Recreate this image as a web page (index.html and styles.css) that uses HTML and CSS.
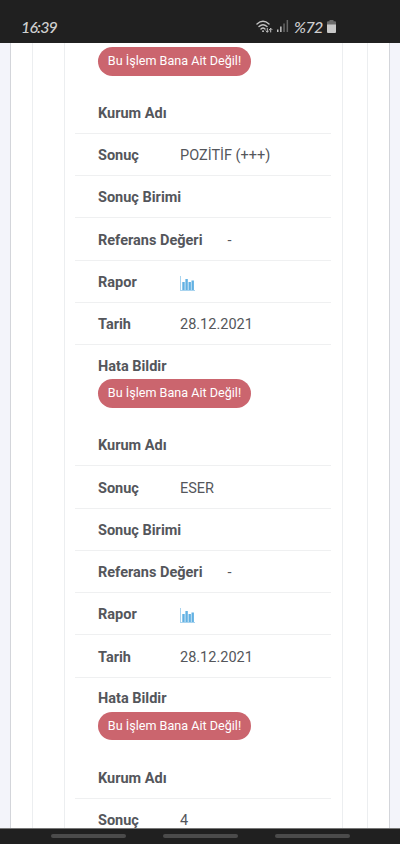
FILE: index.html
```
<!DOCTYPE html>
<html lang="tr">
<head>
<meta charset="utf-8">
<meta name="viewport" content="width=device-width, initial-scale=1">
<title>Tahlillerim</title>
<link rel="stylesheet" href="styles.css">
</head>
<body>
<div class="phone">
  <header class="status">
    <span class="time">16:39</span>
    <svg class="wifi" width="17" height="14" viewBox="0 0 17 14" fill="none" stroke="#c4c4c4" stroke-width="1.4" stroke-linecap="round">
      <path d="M1 4Q7 -1.300 13 4M3 6.500Q7 3 11 6.500M5 9Q7 7.200 9 9"/>
      <path d="M7 11.200h.1" stroke-width="1.800"/>
      <path d="M11.300 8.500v3.500M10 10.900l1.300 1.300 1.300-1.300M14.700 12V8.500M13.400 9.600l1.300-1.300 1.300 1.300" stroke-width="1"/>
    </svg>
    <svg class="signal" width="12" height="12" viewBox="0 0 12 12">
      <path fill="#c4c4c4" d="M0 9.500h1.500V12H0zM3.100 6.500h1.500V12H3.100z"/>
      <path fill="#666" d="M6.300 3.500h1.500V12H6.300zM9.600 0h1.500v12H9.600z"/>
    </svg>
    <span class="percent">%72</span>
    <svg class="battery" width="9" height="13" viewBox="0 0 9 13">
      <path fill="#6c6c6c" d="M2.500 0h4v1.300H8q1 0 1 1V5H0V2.300q0-1 1-1h1.500z"/>
      <path fill="#c8c8c8" d="M0 4.500h9V12q0 1-1 1H1q-1 0-1-1z"/>
    </svg>
  </header>

  <main class="page">
    <div class="card">
      <div class="panel">
        <div class="list">
          <section class="record">
            <div class="report report-cut"><span class="pill">Bu İşlem Bana Ait Değil!</span></div>
          </section>
          <section class="record">
            <div class="row"><b>Kurum Adı</b></div>
            <div class="row"><b>Sonuç</b><span>POZİTİF (+++)</span></div>
            <div class="row"><b>Sonuç Birimi</b></div>
            <div class="row"><b>Referans Değeri</b><span>-</span></div>
            <div class="row"><b>Rapor</b><svg class="chart" width="15" height="15" viewBox="0 0 15 15"><path fill="#a9d4ef" d="M0 0h1v14h14v1H0z"/><path fill="#62b1e3" d="M2.300 6h2.400v8H2.300zM5.400 3h2.400v11H5.400zM8.500 6h2.400v8H8.500zM11.500 4.500h2.400V14h-2.400z"/></svg></div>
            <div class="row"><b>Tarih</b><span>28.12.2021</span></div>
            <div class="report"><b>Hata Bildir</b><span class="pill">Bu İşlem Bana Ait Değil!</span></div>
          </section>
          <section class="record">
            <div class="row"><b>Kurum Adı</b></div>
            <div class="row"><b>Sonuç</b><span>ESER</span></div>
            <div class="row"><b>Sonuç Birimi</b></div>
            <div class="row"><b>Referans Değeri</b><span>-</span></div>
            <div class="row"><b>Rapor</b><svg class="chart" width="15" height="15" viewBox="0 0 15 15"><path fill="#a9d4ef" d="M0 0h1v14h14v1H0z"/><path fill="#62b1e3" d="M2.300 6h2.400v8H2.300zM5.400 3h2.400v11H5.400zM8.500 6h2.400v8H8.500zM11.500 4.500h2.400V14h-2.400z"/></svg></div>
            <div class="row"><b>Tarih</b><span>28.12.2021</span></div>
            <div class="report"><b>Hata Bildir</b><span class="pill">Bu İşlem Bana Ait Değil!</span></div>
          </section>
          <section class="record">
            <div class="row"><b>Kurum Adı</b></div>
            <div class="row"><b>Sonuç</b><span>4</span></div>
          </section>
        </div>
      </div>
    </div>
  </main>

  <nav class="navbar"><i></i><i></i><i></i></nav>
</div>
</body>
</html>
```
FILE: styles.css
```
* { box-sizing: border-box; }

body {
  margin: 0;
  background: #f3f4fa;
  color: #54565b;
  font: 14.5px/20px Roboto, sans-serif;
}

.phone {
  width: 400px;
  height: 844px;
  display: flex;
  flex-direction: column;
  overflow: hidden;
}

.status {
  flex: 0 0 43px;
  display: flex;
  align-items: flex-start;
  padding: 20px 64px 0 21px;
  background: #202020;
  color: #cfcfcf;
  font: italic 500 16px/14px Lato, sans-serif;
}

.time { flex: 1; letter-spacing: -0.900px; }
.signal { margin: 0 5px 0 4px; }
.percent { width: 32px; letter-spacing: -0.600px; white-space: nowrap; }
.battery { margin-left: 1px; }

.page {
  flex: 1;
  min-height: 0;
  overflow: hidden;
  padding: 0 10px;
}

.card {
  height: 100%;
  padding: 0 21px;
  background: #fff;
  border: solid #d3d5da;
  border-width: 0 1px;
}

.panel {
  height: 100%;
  padding: 0 24px 0 31px;
  border: solid #eceef0;
  border-width: 0 1px;
}

.list {
  height: 100%;
  padding: 0 11px 0 10px;
  border: solid #eceef0;
  border-width: 0 1px;
}

.row {
  height: 42.250px;
  padding: 3px 22px 0 23px;
  display: flex;
  align-items: center;
  border-bottom: 1px solid #eff0f1;
}

.row b {
  min-width: 82px;
  padding-right: 25px;
  white-space: nowrap;
}

.row b:last-child { padding-right: 0; }

.row span { white-space: nowrap; }

.chart { margin-top: 1px; }

.report {
  height: 79px;
  padding: 11.500px 22px 0 23px;
}

.report b { display: block; height: 22.500px; }

.report-cut { height: 48.700px; padding-top: 4px; }

.pill {
  display: block;
  width: 153px;
  height: 28.500px;
  border-radius: 15px;
  background: #cb656e;
  color: #fff;
  font-size: 12.600px;
  line-height: 28px;
  text-align: center;
  white-space: nowrap;
}

.navbar {
  flex: 0 0 16px;
  display: flex;
  justify-content: center;
  gap: 37px;
  padding-top: 5px;
  background: #202020;
  border-top: 1px solid #777;
}

.navbar i {
  width: 75px;
  height: 4px;
  border-radius: 2px;
  background: #4b4b4b;
}
```
